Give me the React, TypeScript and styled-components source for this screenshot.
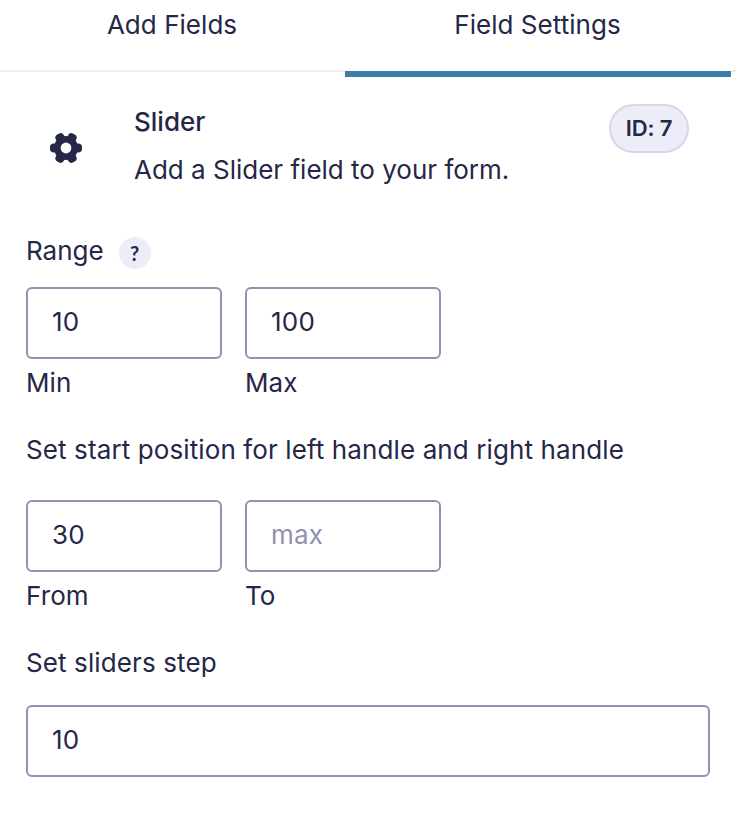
import React from "react";
import styled, { createGlobalStyle } from "styled-components";

const Global = createGlobalStyle`
  * { box-sizing: border-box; }
  body { margin: 0; background: #fff; }
`;
const Panel = styled.main`
  width: 736px; height: 820px; overflow: hidden; background: #fff;
  font-family: Inter, sans-serif; color: #242748; font-weight: 400;
  font-size: 26px; line-height: 32px; letter-spacing: 0.11px;
  -webkit-font-smoothing: antialiased;
`;
const Tabs = styled.nav`
  display: grid; grid-template-columns: 345px 386px 5px; height: 77px;
`;
const TabRule = styled.div`height: 72px; border-bottom: 2px solid #ecedf8;`;
const Tab = styled.button<{ $active?: boolean }>`
  height: ${p => (p.$active ? 77 : 72)}px; padding: 9px 1px 0 0; border: 0; background: none;
  border-bottom: ${p => (p.$active ? "6px solid #3e7da6" : "2px solid #ecedf8")};
  font: inherit; letter-spacing: 0.04px; color: inherit;
  display: flex; align-items: flex-start; justify-content: center;
`;
const Header = styled.header`
  display: flex; align-items: flex-start; height: 158px; padding: 27px 47px 0 50px;
`;
const Gear = styled.svg`
  width: 32px; height: 32px; margin: 28px 52px 0 0; flex: none;
`;
const Intro = styled.div`flex: 1;`;
const Title = styled.h1`
  margin: 2px 0 16px; font: inherit; font-weight: 500; letter-spacing: 0;
`;
const Text = styled.p`margin: 0; letter-spacing: 0;`;
const Badge = styled.span`
  width: 80px; height: 49px; border: 2px solid #d5d7e9; border-radius: 25px; background: #ecedf8;
  display: flex; align-items: center; justify-content: center; padding-bottom: 1px;
  font-size: 22px; font-weight: 600; letter-spacing: -0.1px;
`;
const Fields = styled.section`padding: 0 26px;`;
const LabelRow = styled.div<{ $gap: number }>`
  display: flex; align-items: center; gap: 15px; height: 34px; margin-bottom: ${p => p.$gap}px;
`;
const RangeLabel = styled.span`padding-bottom: 2px; letter-spacing: 0;`;
const Help = styled.button`
  width: 32px; height: 32px; border: 0; border-radius: 50%; background: #ecedf8; padding: 0;
  color: inherit; font: 700 20px/32px Lato, sans-serif; margin-top: 2px;
`;
const Pair = styled.div<{ $gap: number }>`
  display: grid; grid-template-columns: 196px 196px; column-gap: 23px; margin-bottom: ${p => p.$gap}px;
`;
const Field = styled.label`display: flex; flex-direction: column; gap: 8px;`;
const Input = styled.input`
  width: 100%; height: 72px; border: 2px solid #9092b2; border-radius: 6px; background: #fff;
  padding: 0 24px 4px; font: inherit; letter-spacing: 0.2px; color: inherit; outline: 0;
  &::placeholder { color: #9092b2; opacity: 1; }
`;

export default function App() {
  return (
    <Panel>
      <Global />
      <Tabs>
        <Tab>Add Fields</Tab>
        <Tab $active>Field Settings</Tab>
        <TabRule />
      </Tabs>
      <Header>
        <Gear viewBox="0 0 32 32" fill="#242748">
          <circle cx="16" cy="16" r="12" />
          <rect y="11.4" width="32" height="9.2" rx="3.8" />
          <rect y="11.4" width="32" height="9.2" rx="3.8" transform="rotate(60 16 16)" />
          <rect y="11.4" width="32" height="9.2" rx="3.8" transform="rotate(-60 16 16)" />
          <circle cx="16" cy="16" r="5.4" fill="#fff" />
        </Gear>
        <Intro>
          <Title>Slider</Title>
          <Text>Add a Slider field to your form.</Text>
        </Intro>
        <Badge>ID: 7</Badge>
      </Header>
      <Fields>
        <LabelRow $gap={18}><RangeLabel>Range</RangeLabel><Help>?</Help></LabelRow>
        <Pair $gap={34}>
          <Field><Input defaultValue="10" />Min</Field>
          <Field><Input defaultValue="100" />Max</Field>
        </Pair>
        <LabelRow $gap={33}>Set start position for left handle and right handle</LabelRow>
        <Pair $gap={34}>
          <Field><Input defaultValue="30" />From</Field>
          <Field><Input placeholder="max" />To</Field>
        </Pair>
        <LabelRow $gap={25}>Set sliders step</LabelRow>
        <Input defaultValue="10" aria-label="Set sliders step" />
      </Fields>
    </Panel>
  );
}
